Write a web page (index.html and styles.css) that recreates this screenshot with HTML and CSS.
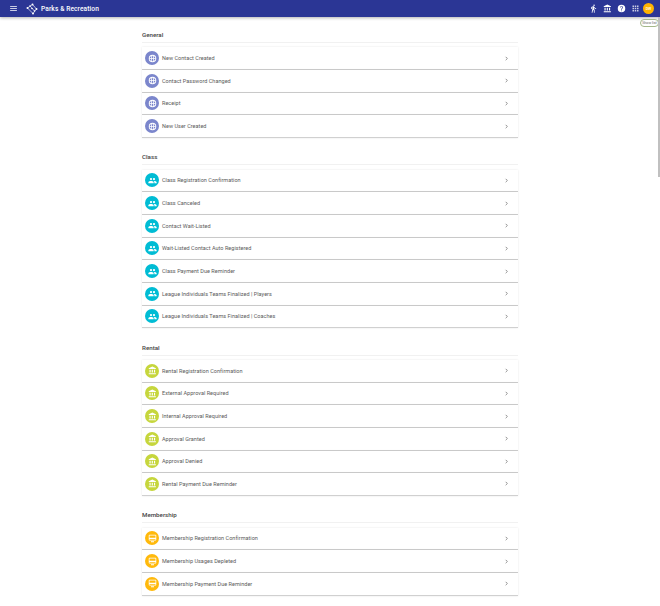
FILE: index.html
```html
<!DOCTYPE html>
<html lang="en">
<head>
<meta charset="utf-8">
<title>Parks &amp; Recreation</title>
<link rel="stylesheet" href="styles.css">
</head>
<body>
<svg class="defs" width="0" height="0" aria-hidden="true">
  <symbol id="i-globe" viewBox="0 0 24 24"><path fill="currentColor" d="M12 2a10 10 0 1 0 0 20 10 10 0 0 0 0-20zm7.93 9h-3.95a15.6 15.6 0 0 0-1.3-5.6A8 8 0 0 1 19.93 11zM12 4.04c.83 1.2 1.6 3.4 1.9 6.96h-3.8c.3-3.56 1.07-5.76 1.9-6.96zM4.07 13h3.95a15.6 15.6 0 0 0 1.3 5.6A8 8 0 0 1 4.07 13zm3.95-2H4.07a8 8 0 0 1 5.25-5.6A15.6 15.6 0 0 0 8.02 11zM12 19.96c-.83-1.2-1.6-3.4-1.9-6.96h3.8c-.3 3.56-1.07 5.76-1.9 6.96zm2.68-1.36a15.6 15.6 0 0 0 1.3-5.6h3.95a8 8 0 0 1-5.25 5.6z"/></symbol>
  <symbol id="i-people" viewBox="0 0 24 24"><path fill="currentColor" d="M16 11a3 3 0 1 0 0-6 3 3 0 0 0 0 6zm-8 0a3 3 0 1 0 0-6 3 3 0 0 0 0 6zm0 2c-2.33 0-7 1.17-7 3.5V19h14v-2.5C15 14.17 10.33 13 8 13zm8 0c-.29 0-.62.02-.97.05 1.16.84 1.97 1.97 1.97 3.45V19h6v-2.5c0-2.33-4.67-3.5-7-3.5z"/></symbol>
  <symbol id="i-bank" viewBox="0 0 24 24"><path fill="currentColor" d="M4 10v7h3v-7H4zm6 0v7h3v-7h-3zM2 22h19v-3H2v3zm14-12v7h3v-7h-3zM11.5 1 2 6v2h19V6l-9.5-5z"/></symbol>
  <symbol id="i-card" viewBox="0 0 24 24"><path fill="currentColor" d="M20 2H4a2 2 0 0 0-2 2v11a2 2 0 0 0 2 2h16a2 2 0 0 0 2-2V4a2 2 0 0 0-2-2zm0 13H4v-2h16v2zm0-5H4V4h16v6zM8 19h8v3H8z"/></symbol>
  <symbol id="i-chev" viewBox="0 0 24 24"><path fill="none" stroke="currentColor" stroke-width="3.4" d="m8 4 8 8-8 8"/></symbol>
</svg>

<header class="topbar">
  <svg class="menu" viewBox="0 0 24 24"><path fill="currentColor" d="M3 18h18v-2H3v2zm0-5h18v-2H3v2zm0-7v2h18V6H3z"/></svg>
  <svg class="logo" viewBox="0 0 24 24">
    <path fill="none" stroke="currentColor" stroke-width="1.3" d="M13 3 21 12 14 21 3 10 13 3M8 6 17 16"/>
    <g fill="currentColor"><circle cx="13" cy="3" r="2"/><circle cx="21" cy="12" r="2"/><circle cx="14" cy="21" r="2"/><circle cx="3" cy="10" r="2"/><circle cx="8" cy="6" r="1.6"/><circle cx="17" cy="16" r="1.6"/><circle cx="12" cy="11" r="1.6"/></g>
  </svg>
  <span class="brand">Parks &amp; Recreation</span>
  <div class="actions">
    <svg class="act" viewBox="0 0 24 24"><path fill="currentColor" d="M13.5 5.5a2 2 0 1 0 0-4 2 2 0 0 0 0 4zM9.8 8.9 7 23h2.1l1.8-8 2.1 2v6h2v-7.5l-2.1-2 .6-3A7.3 7.3 0 0 0 19 13v-2c-1.9 0-3.5-1-4.3-2.4l-1-1.6c-.4-.6-1-1-1.7-1-.3 0-.5.1-.8.1L6 8.3V13h2V9.6l1.8-.7"/></svg>
    <svg class="act" viewBox="0 0 24 24"><use href="#i-bank"/></svg>
    <svg class="act" viewBox="0 0 24 24"><path fill="currentColor" d="M12 2a10 10 0 1 0 0 20 10 10 0 0 0 0-20zm1 17h-2v-2h2v2zm2.07-7.75-.9.92C13.45 12.9 13 13.5 13 15h-2v-.5c0-1.1.45-2.1 1.17-2.83l1.24-1.26A2 2 0 1 0 10 9H8a4 4 0 1 1 8 0c0 .88-.36 1.68-.93 2.25z"/></svg>
    <svg class="act" viewBox="0 0 24 24"><path fill="currentColor" d="M4 8h4V4H4v4zm6 12h4v-4h-4v4zm-6 0h4v-4H4v4zm0-6h4v-4H4v4zm6 0h4v-4h-4v4zm6-10v4h4V4h-4zm-6 4h4V4h-4v4zm6 6h4v-4h-4v4zm0 6h4v-4h-4v4z"/></svg>
    <span class="avatar">DW</span>
  </div>
</header>
<span class="tip">Show list</span>
<div class="scroll-thumb"></div>

<main class="page">
  <section class="group">
    <h2>General</h2>
    <ul class="list">
      <li class="row"><span class="badge indigo"><svg><use href="#i-globe"/></svg></span><span class="label">New Contact Created</span><svg class="chev"><use href="#i-chev"/></svg></li>
      <li class="row"><span class="badge indigo"><svg><use href="#i-globe"/></svg></span><span class="label">Contact Password Changed</span><svg class="chev"><use href="#i-chev"/></svg></li>
      <li class="row"><span class="badge indigo"><svg><use href="#i-globe"/></svg></span><span class="label">Receipt</span><svg class="chev"><use href="#i-chev"/></svg></li>
      <li class="row"><span class="badge indigo"><svg><use href="#i-globe"/></svg></span><span class="label">New User Created</span><svg class="chev"><use href="#i-chev"/></svg></li>
    </ul>
  </section>
  <section class="group">
    <h2>Class</h2>
    <ul class="list">
      <li class="row"><span class="badge cyan"><svg><use href="#i-people"/></svg></span><span class="label">Class Registration Confirmation</span><svg class="chev"><use href="#i-chev"/></svg></li>
      <li class="row"><span class="badge cyan"><svg><use href="#i-people"/></svg></span><span class="label">Class Canceled</span><svg class="chev"><use href="#i-chev"/></svg></li>
      <li class="row"><span class="badge cyan"><svg><use href="#i-people"/></svg></span><span class="label">Contact Wait-Listed</span><svg class="chev"><use href="#i-chev"/></svg></li>
      <li class="row"><span class="badge cyan"><svg><use href="#i-people"/></svg></span><span class="label">Wait-Listed Contact Auto Registered</span><svg class="chev"><use href="#i-chev"/></svg></li>
      <li class="row"><span class="badge cyan"><svg><use href="#i-people"/></svg></span><span class="label">Class Payment Due Reminder</span><svg class="chev"><use href="#i-chev"/></svg></li>
      <li class="row"><span class="badge cyan"><svg><use href="#i-people"/></svg></span><span class="label">League Individuals Teams Finalized | Players</span><svg class="chev"><use href="#i-chev"/></svg></li>
      <li class="row"><span class="badge cyan"><svg><use href="#i-people"/></svg></span><span class="label">League Individuals Teams Finalized | Coaches</span><svg class="chev"><use href="#i-chev"/></svg></li>
    </ul>
  </section>
  <section class="group">
    <h2>Rental</h2>
    <ul class="list">
      <li class="row"><span class="badge lime"><svg><use href="#i-bank"/></svg></span><span class="label">Rental Registration Confirmation</span><svg class="chev"><use href="#i-chev"/></svg></li>
      <li class="row"><span class="badge lime"><svg><use href="#i-bank"/></svg></span><span class="label">External Approval Required</span><svg class="chev"><use href="#i-chev"/></svg></li>
      <li class="row"><span class="badge lime"><svg><use href="#i-bank"/></svg></span><span class="label">Internal Approval Required</span><svg class="chev"><use href="#i-chev"/></svg></li>
      <li class="row"><span class="badge lime"><svg><use href="#i-bank"/></svg></span><span class="label">Approval Granted</span><svg class="chev"><use href="#i-chev"/></svg></li>
      <li class="row"><span class="badge lime"><svg><use href="#i-bank"/></svg></span><span class="label">Approval Denied</span><svg class="chev"><use href="#i-chev"/></svg></li>
      <li class="row"><span class="badge lime"><svg><use href="#i-bank"/></svg></span><span class="label">Rental Payment Due Reminder</span><svg class="chev"><use href="#i-chev"/></svg></li>
    </ul>
  </section>
  <section class="group">
    <h2>Membership</h2>
    <ul class="list">
      <li class="row"><span class="badge amber"><svg><use href="#i-card"/></svg></span><span class="label">Membership Registration Confirmation</span><svg class="chev"><use href="#i-chev"/></svg></li>
      <li class="row"><span class="badge amber"><svg><use href="#i-card"/></svg></span><span class="label">Membership Usages Depleted</span><svg class="chev"><use href="#i-chev"/></svg></li>
      <li class="row"><span class="badge amber"><svg><use href="#i-card"/></svg></span><span class="label">Membership Payment Due Reminder</span><svg class="chev"><use href="#i-chev"/></svg></li>
    </ul>
  </section>
</main>
</body>
</html>
```

FILE: styles.css
```css
* { box-sizing: border-box; }
html, body { margin: 0; height: 606px; overflow: hidden; background: #fff; }
body { font-family: Roboto, "Liberation Sans", sans-serif; color: #3c3c3c; }
.defs { position: absolute; }

.topbar {
  height: 17px;
  background: #2b3695;
  color: #fff;
  display: flex;
  align-items: center;
  padding: 0 6px 0 9px;
  box-shadow: 0 1px 3px rgba(0,0,0,.3);
}
.menu { width: 9px; height: 9px; margin-right: 8px; }
.logo { width: 12px; height: 12px; margin-right: 3px; }
.brand { font-size: 6.6px; font-weight: 500; letter-spacing: .1px; }
.actions { margin-left: auto; display: flex; align-items: center; gap: 5px; }
.act { width: 9px; height: 9px; display: block; }
.act:nth-child(4) { opacity: .75; }
.avatar {
  width: 11px; height: 11px; border-radius: 50%;
  background: #ffb300; color: #fff;
  font-size: 3.6px; font-weight: 500;
  display: flex; align-items: center; justify-content: center;
  margin-left: -2px;
}
.tip {
  position: absolute; left: 640px; top: 19px;
  width: 19px; height: 8px;
  border: 1px solid #a5b88a; border-radius: 5px;
  background: #fff; color: #666;
  font-size: 3.6px; line-height: 6px; text-align: center;
}
.scroll-thumb {
  position: absolute; left: 658px; top: 17px;
  width: 2px; height: 160px;
  background: #c0c0c0;
}

.page { width: 376px; margin-left: 142px; padding-top: 14px; }
.group { margin-bottom: 15.5px; }
.group h2 {
  margin: 0 0 4.3px; height: 12px;
  font-size: 6.2px; font-weight: 500; line-height: 9px;
  color: #444;
  border-bottom: 1px solid #f1f1f1;
}
.list { list-style: none; margin: 0; padding: 0; }
.row {
  height: 22.65px;
  display: flex; align-items: center;
  padding: 0 9px 0 3px;
  background: #fff;
  border-bottom: 1px solid #d0d0d0;
  box-shadow: 0 0 2px rgba(0,0,0,.1);
}
.badge {
  width: 14px; height: 14px; border-radius: 50%;
  display: flex; align-items: center; justify-content: center;
  color: #fff; flex: none;
}
.badge svg { width: 9px; height: 9px; }
.indigo { background: #7b86cc; }
.cyan { background: #00bcd4; }
.lime { background: #c6d63c; }
.amber { background: #ffb90b; }
.label { margin-left: 3px; font-size: 5.5px; color: #5a5a5a; letter-spacing: .03px; flex: 1; }
.chev { width: 5px; height: 5px; color: #666; }
```
